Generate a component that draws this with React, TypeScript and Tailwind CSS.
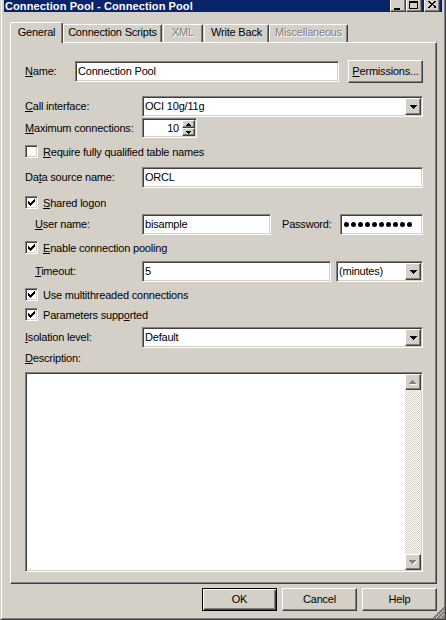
import React from 'react';

const raised =
  'border border-t-white border-l-white border-r-[#404040] border-b-[#404040] shadow-[inset_-1px_-1px_0_#808080]';
const sunken =
  'border border-t-[#808080] border-l-[#808080] border-r-white border-b-white shadow-[inset_1px_1px_0_#404040,inset_-1px_-1px_0_#d4d0c8]';

function U({ children }: { children: React.ReactNode }) {
  return <span className="underline underline-offset-[1px]">{children}</span>;
}

function DownArrow() {
  return (
    <svg width="7" height="4" viewBox="0 0 7 4" shapeRendering="crispEdges">
      <path d="M0 0h7v1h-1v1h-1v1h-1v1h-1v-1h-1v-1h-1v-1h-1z" fill="#000" />
    </svg>
  );
}

function GrayArrow({ up }: { up?: boolean }) {
  const d = up
    ? 'M3 0h1v1h1v1h1v1h1v1h-7v-1h1v-1h1v-1h1z'
    : 'M0 0h7v1h-1v1h-1v1h-1v1h-1v-1h-1v-1h-1v-1h-1z';
  return (
    <svg width="8" height="5" viewBox="0 0 8 5" shapeRendering="crispEdges">
      <path d={d} fill="#fff" transform="translate(1 1)" />
      <path d={d} fill="#808080" />
    </svg>
  );
}

function Combo({ value, className }: { value: string; className: string }) {
  return (
    <div className={`${sunken} p-px bg-white h-[21px] flex ${className}`}>
      <div className="flex-1 flex items-center pl-px">{value}</div>
      <div className={`${raised} w-[16px] h-[17px] bg-[#d4d0c8] flex items-center justify-center`}>
        <DownArrow />
      </div>
    </div>
  );
}

function Edit({ value, className }: { value?: string; className: string }) {
  return (
    <div className={`${sunken} py-px pr-px pl-[2px] bg-white h-[21px] flex items-center ${className}`}>
      {value}
    </div>
  );
}

function CheckBox({ checked, children }: { checked?: boolean; children: React.ReactNode }) {
  return (
    <div className="flex items-center h-[13px]">
      <div className={`${sunken} w-[13px] h-[13px] bg-white p-px flex items-center justify-center`}>
        {checked && (
          <svg width="7" height="7" viewBox="0 0 7 7" shapeRendering="crispEdges">
            <path
              d="M0 2h1v3h-1zM1 3h1v3h-1zM2 4h1v3h-1zM3 3h1v3h-1zM4 2h1v3h-1zM5 1h1v3h-1zM6 0h1v3h-1z"
              fill="#000"
            />
          </svg>
        )}
      </div>
      <span className="ml-[5px] pt-[2px]">{children}</span>
    </div>
  );
}

function TitleBtn({ kind, className = '' }: { kind: 'min' | 'max' | 'close'; className?: string }) {
  return (
    <div className={`${raised} w-[16px] h-[14px] bg-[#d4d0c8] relative ${className}`}>
      <svg className="absolute -left-px -top-px" width="16" height="14" viewBox="0 0 16 14" shapeRendering="crispEdges">
        {kind === 'min' && <rect x="4" y="10" width="6" height="2" fill="#000" />}
        {kind === 'max' && (
          <path d="M3 3h9v2h-9zM3 3h1v8h-1zM11 3h1v8h-1zM3 10h9v1h-9z" fill="#000" />
        )}
        {kind === 'close' && (
          <path
            d="M4 3h2v1h-2zM5 4h2v1h-2zM6 5h2v1h-2zM7 6h2v1h-2zM6 7h2v1h-2zM5 8h2v1h-2zM4 9h2v1h-2zM10 3h2v1h-2zM9 4h2v1h-2zM8 5h2v1h-2zM9 7h2v1h-2zM10 8h2v1h-2zM11 9h1v1h-1zM10 9h1v1h-1z"
            fill="#000"
          />
        )}
      </svg>
    </div>
  );
}

const tabBase =
  'h-[18px] bg-[#d4d0c8] border-t border-l border-r border-t-white border-l-white border-r-[#404040] shadow-[inset_-1px_0_0_#808080] rounded-t-[2px] flex items-start justify-center pt-px';
const disabledText = 'text-[#808080] [text-shadow:1px_1px_0_#fff]';

export default function App() {
  return (
    <div className="w-[446px] h-[620px] bg-[#d4d0c8] relative overflow-hidden font-['Liberation_Sans',Arial,sans-serif] text-[11px] leading-[13px] tracking-[-0.2px] text-black">
      <div className="h-full border-l border-r border-b border-l-[#d4d0c8] border-r-[#404040] border-b-[#404040]">
        <div className="h-full border-l border-r border-b border-l-white border-r-[#808080] border-b-[#808080] px-[2px]">
          {/* title bar, top part cut off */}
          <div className="h-[12px] overflow-hidden bg-[#0a246a]">
            <div className="h-[18px] -mt-[6px] flex items-start">
              <span className="flex-1 pl-px pt-[6px] font-bold text-white tracking-[0.1px]">
                Connection Pool - Connection Pool
              </span>
              <div className="flex pt-[4px] pr-[2px]">
                <TitleBtn kind="min" />
                <TitleBtn kind="max" />
                <TitleBtn kind="close" className="ml-[2px]" />
              </div>
            </div>
          </div>

          <div className="pl-[6px] pr-[5px]">
            {/* tabs */}
            <div className="flex items-end h-[30px]">
              <div className="relative z-10 -mb-px h-[21px] w-[53px] bg-[#d4d0c8] border-t border-l border-r border-t-white border-l-white border-r-[#404040] shadow-[inset_-1px_0_0_#808080] rounded-t-[2px] flex items-start justify-center pt-[3px]">
                General
              </div>
              <div className={`${tabBase} w-[99px]`}>Connection Scripts</div>
              <div className={`${tabBase} w-[40px] ml-px ${disabledText}`}>XML</div>
              <div className={`${tabBase} w-[65px] ml-px`}>Write Back</div>
              <div className={`${tabBase} w-[79px] ${disabledText}`}>Miscellaneous</div>
            </div>

            {/* panel */}
            <div className="h-[542px] border border-t-white border-l-white border-r-[#404040] border-b-[#404040] shadow-[inset_-1px_-1px_0_#808080] pl-[14px] pr-[13px] flex flex-col">
              <div className="flex items-center h-[23px] mt-[17px]">
                <span className="w-[50px]">
                  <U>N</U>ame:
                </span>
                <Edit value="Connection Pool" className="w-[264px]" />
                <div className={`${raised} ml-[9px] w-[75px] h-[23px] flex items-center justify-center`}>
                  <span>
                    <U>P</U>ermissions...
                  </span>
                </div>
              </div>

              <div className="flex items-center h-[21px] mt-[13px]">
                <span className="w-[117px]">
                  <U>C</U>all interface:
                </span>
                <Combo value="OCI 10g/11g" className="flex-1" />
              </div>

              <div className="flex items-center h-[20px] mt-px">
                <span className="w-[117px]">
                  <U>M</U>aximum connections:
                </span>
                <div className={`${sunken} p-px bg-white w-[55px] h-[20px] flex`}>
                  <div className="flex-1 flex items-center justify-end pr-[3px]">10</div>
                  <div className="w-[13px] flex flex-col">
                    <div className={`${raised} h-[8px] bg-[#d4d0c8] flex items-center justify-center`}>
                      <svg width="5" height="3" viewBox="0 0 5 3" shapeRendering="crispEdges">
                        <path d="M2 0h1v1h1v1h1v1h-5v-1h1v-1h1z" fill="#000" />
                      </svg>
                    </div>
                    <div className={`${raised} h-[8px] bg-[#d4d0c8] flex items-center justify-center`}>
                      <svg width="5" height="3" viewBox="0 0 5 3" shapeRendering="crispEdges">
                        <path d="M0 0h5v1h-1v1h-1v1h-1v-1h-1v-1h-1z" fill="#000" />
                      </svg>
                    </div>
                  </div>
                </div>
              </div>

              <div className="mt-[7px]">
                <CheckBox>
                  <U>R</U>equire fully qualified table names
                </CheckBox>
              </div>

              <div className="flex items-center h-[21px] mt-[9px]">
                <span className="w-[117px]">
                  Da<U>t</U>a source name:
                </span>
                <Edit value="ORCL" className="flex-1" />
              </div>

              <div className="mt-[8px]">
                <CheckBox checked>
                  <U>S</U>hared logon
                </CheckBox>
              </div>

              <div className="flex items-center h-[21px] mt-[5px] pl-[10px]">
                <span className="w-[107px]">
                  <U>U</U>ser name:
                </span>
                <Edit value="bisample" className="w-[129px]" />
                <span className="ml-[11px] w-[58px]">Password:</span>
                <div className={`${sunken} p-px pl-[3px] bg-white h-[21px] flex-1 flex items-center gap-[2px]`}>
                  {Array.from({ length: 10 }).map((_, i) => (
                    <span key={i} className="w-[5px] h-[5px] rounded-full bg-black" />
                  ))}
                </div>
              </div>

              <div className="mt-[6px]">
                <CheckBox checked>
                  <U>E</U>nable connection pooling
                </CheckBox>
              </div>

              <div className="flex items-center h-[21px] mt-[7px] pl-[10px]">
                <span className="w-[107px]">
                  <U>T</U>imeout:
                </span>
                <Edit value="5" className="w-[189px]" />
                <Combo value="(minutes)" className="ml-[5px] flex-1" />
              </div>

              <div className="mt-[6px]">
                <CheckBox checked>Use multithreaded connections</CheckBox>
              </div>

              <div className="mt-[7px]">
                <CheckBox checked>
                  Parameters supp<U>o</U>rted
                </CheckBox>
              </div>

              <div className="flex items-center h-[21px] mt-[6px]">
                <span className="w-[117px]">
                  <U>I</U>solation level:
                </span>
                <Combo value="Default" className="flex-1" />
              </div>

              <div className="mt-[4px] h-[13px]">
                <U>D</U>escription:
              </div>

              <div className={`${sunken} p-px bg-white h-[200px] mt-[7px] flex justify-end`}>
                <div className="w-[16px] flex flex-col">
                  <div className={`${raised} h-[16px] bg-[#d4d0c8] flex items-center justify-center`}>
                    <GrayArrow up />
                  </div>
                  <div className="flex-1 bg-[repeating-conic-gradient(#d4d0c8_0%_25%,#ffffff_0%_50%)] bg-[length:2px_2px]" />
                  <div className={`${raised} h-[16px] bg-[#d4d0c8] flex items-center justify-center`}>
                    <GrayArrow />
                  </div>
                </div>
              </div>
            </div>

            {/* dialog buttons */}
            <div className="flex justify-end gap-[5px] mt-[4px]">
              <div className="w-[75px] h-[23px] border border-black shadow-[inset_1px_1px_0_#fff,inset_-1px_-1px_0_#404040,inset_-2px_-2px_0_#808080] flex items-center justify-center">
                OK
              </div>
              <div className={`${raised} w-[75px] h-[23px] flex items-center justify-center`}>Cancel</div>
              <div className={`${raised} w-[75px] h-[23px] flex items-center justify-center`}>Help</div>
            </div>
          </div>
        </div>
      </div>

      {/* size grip */}
      <svg className="absolute right-px bottom-px" width="13" height="13" viewBox="0 0 13 13" shapeRendering="crispEdges">
        <path d="M12 1L1 12M12 5L5 12M12 9L9 12" stroke="#fff" strokeWidth="1" />
        <path d="M13 1L1 13M13 5L5 13M13 9L9 13" stroke="#808080" strokeWidth="1.5" />
      </svg>
    </div>
  );
}
